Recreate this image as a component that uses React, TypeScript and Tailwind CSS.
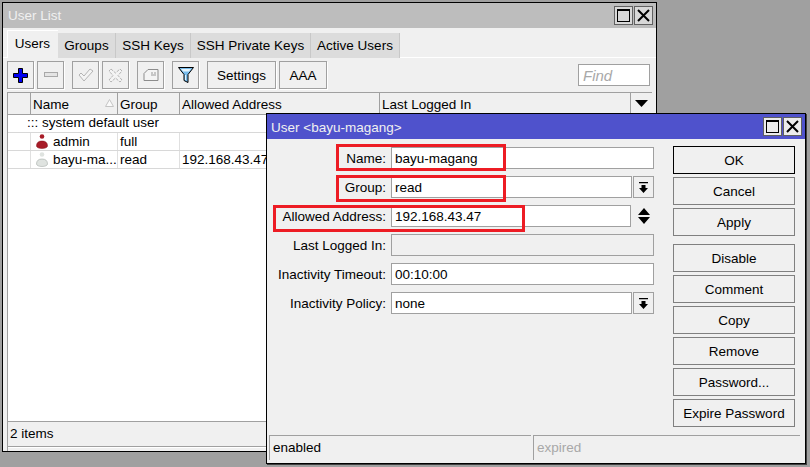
import React from 'react';

const Plus = () => (
    <svg width="15" height="15" viewBox="0 0 15 15">
        <path d="M5.500 .5h4v5h5v4h-5v5h-4v-5h-5v-4h5z" fill="#0000f0" stroke="#000" strokeWidth="1" />
    </svg>
);
const Minus = () => (
    <svg width="16" height="8" viewBox="0 0 16 8">
        <rect x="1.500" y="1.500" width="13" height="4" fill="#e4e4e4" stroke="#a8a8a8" />
    </svg>
);
const Check = () => (
    <svg width="16" height="14" viewBox="0 0 16 14">
        <path d="M1 7l2-2 3 3 6-7 3 2-9 10z" fill="#f4f4f4" stroke="#b4b4b4" />
    </svg>
);
const Cross = () => (
    <svg width="15" height="15" viewBox="0 0 15 15">
        <path d="M3 1l4.500 4 4.500-4 2 2-4 4.500 4 4.500-2 2-4.500-4-4.500 4-2-2 4-4.500-4-4.500z" fill="#f4f4f4" stroke="#b4b4b4" strokeDasharray="3 1" />
    </svg>
);
const Note = () => (
    <svg width="16" height="14" viewBox="0 0 16 14">
        <path d="M5 1.500h10v11H1v-7z" fill="#f4f4f4" stroke="#8c8c8c" />
        <path d="M8 5h2M11 5h2M8 7h5" stroke="#9a9a9a" />
    </svg>
);
const Funnel = () => (
    <svg width="16" height="16" viewBox="0 0 16 16">
        <path d="M.5 .5h15l-5.500 7v8l-4-2V7.500z" fill="#78bcec" stroke="#000" />
        <path d="M3 2h10l-2 2.500H5z" fill="#e4f4fc" />
        <path d="M7 8h1v5H7z" fill="#e4f4fc" />
    </svg>
);
const DownBar = () => (
    <svg width="11" height="11" viewBox="0 0 11 11">
        <path d="M1 0.500h9" stroke="#000" strokeWidth="1.500" />
        <path d="M3.500 3h4v3H10l-4.500 5L1 6h2.500z" fill="#000" />
    </svg>
);
const UpDown = () => (
    <svg width="12" height="16" viewBox="0 0 12 16">
        <path d="M6 0l6 7H0zM0 9h12l-6 7z" fill="#000" />
    </svg>
);
const Person = ({ body, edge }: { body: string; edge: string }) => (
    <svg className="shrink-0" width="12" height="15" viewBox="0 0 12 15">
        <circle cx="6" cy="2.500" r="2.300" fill={body} />
        <path d="M.5 12c0-3.500 2-5 5.500-5s5.500 1.500 5.500 5c0 1.500-2.500 2.500-5.500 2.500S.5 13.500.5 12z" fill={body} stroke={edge} strokeWidth="0.500" />
    </svg>
);

const ToolButton = ({ children, className }: { children: React.ReactNode; className?: string }) => (
    <div className={`flex h-[28px] items-center justify-center border border-[#a0a0a0] bg-[#f0f0f0] shadow-[1px_1px_0_#fff] ${className ?? 'w-[27px]'}`}>
        {children}
    </div>
);

const WinButton = ({ close, fill }: { close?: boolean; fill: string }) => (
    <div className={`flex h-[19px] w-[19px] items-center justify-center border border-[#606060] ${fill}`}>
        {close ? (
            <svg width="13" height="13" viewBox="0 0 13 13">
                <path d="M1 1l11 11M12 1L1 12" stroke="#000" strokeWidth="2" />
            </svg>
        ) : (
            <div className="h-[13px] w-[13px] border border-black border-t-[2px]" />
        )}
    </div>
);

const Tab = ({ label, className }: { label: string; className: string }) => (
    <div className={`mt-[3px] flex h-[25px] items-center justify-center border-r border-[#c8c8c8] bg-[#dcdcdc] pt-px ${className}`}>{label}</div>
);

const HeaderCell = ({ label, className }: { label: string; className: string }) => (
    <div className={`flex h-full items-center border-r border-[#a0a0a0] pt-[2px] pl-[2px] ${className}`}>{label}</div>
);

const Row = ({ icon, name, group, address }: { icon: React.ReactNode; name: string; group: string; address: string }) => (
    <div className="flex h-[18px] items-center border-b border-[#d8d8d8]">
        <div className="h-full w-[23px] border-r border-[#e0e0e0]" />
        <div className="flex h-full w-[87px] items-center gap-[5px] border-r border-[#e0e0e0] pl-[5px] whitespace-nowrap">
            {icon}
            <span>{name}</span>
        </div>
        <div className="flex h-full w-[62px] items-center border-r border-[#e0e0e0] pl-[2px]">{group}</div>
        <div className="pl-[2px]">{address}</div>
    </div>
);

const Field = ({ label, value, disabled, after, inputClass }: { label: string; value?: string; disabled?: boolean; after?: React.ReactNode; inputClass?: string }) => (
    <div className="flex h-[22px] items-center">
        <div className="w-[120px] pt-px pr-[5px] text-right whitespace-nowrap">{label}</div>
        <div className={`flex h-full items-center border border-[#a0a0a0] pt-px pl-[3px] ${disabled ? 'bg-[#f0f0f0]' : 'bg-white'} ${inputClass ?? 'w-[263px]'}`}>{value}</div>
        {after}
    </div>
);

const DialogButton = ({ label, strong, className }: { label: string; strong?: boolean; className?: string }) => (
    <div className={`flex h-[28px] w-[122px] items-center justify-center border pt-[2px] ${strong ? 'border-black' : 'border-[#808080]'} bg-[#f0f0f0] ${className ?? ''}`}>{label}</div>
);

const ArrowBox = () => (
    <div className="ml-px flex h-full w-[21px] items-center justify-center border border-[#a0a0a0] bg-[#f0f0f0]">
        <DownBar />
    </div>
);

const App = () => {
    return (
        <div className='relative h-[467px] w-[810px] overflow-hidden bg-[#a0a0a0] [font-family:"Liberation_Sans",sans-serif] text-[13.5px] leading-none text-black'>
            {/* User List window */}
            <div className="absolute top-[2px] left-[2px] flex h-[450px] w-[655px] flex-col border border-black bg-[#f0f0f0]">
                <div className="flex h-[25px] shrink-0 items-center justify-between bg-[#bdbdbd] pr-[3px] pl-[5px] text-[#f0f0f0]">
                    <span>User List</span>
                    <div className="flex gap-px">
                        <WinButton fill="bg-[#d8d8d8]" />
                        <WinButton close fill="bg-[#d8d8d8]" />
                    </div>
                </div>
                <div className="flex h-[30px] shrink-0 border-b border-white pt-[2px] pl-[4px]">
                    <div className="flex h-[28px] w-[51px] items-center justify-center bg-[#f0f0f0] shadow-[inset_1px_1px_0_#fff]">Users</div>
                    <Tab label="Groups" className="w-[58px]" />
                    <Tab label="SSH Keys" className="w-[75px]" />
                    <Tab label="SSH Private Keys" className="w-[120px]" />
                    <Tab label="Active Users" className="w-[89px]" />
                </div>
                <div className="flex h-[34px] shrink-0 items-center pr-[6px] pl-[4px]">
                    <ToolButton><Plus /></ToolButton>
                    <ToolButton className="ml-[3px] w-[27px]"><Minus /></ToolButton>
                    <ToolButton className="ml-[8px] w-[27px]"><Check /></ToolButton>
                    <ToolButton className="ml-[3px] w-[27px]"><Cross /></ToolButton>
                    <ToolButton className="ml-[8px] w-[27px]"><Note /></ToolButton>
                    <ToolButton className="ml-[8px] w-[27px]"><Funnel /></ToolButton>
                    <ToolButton className="ml-[8px] w-[69px] pt-[2px]">Settings</ToolButton>
                    <ToolButton className="ml-[3px] w-[48px] pt-[2px]">AAA</ToolButton>
                    <div className="ml-auto flex h-[22px] w-[72px] items-center border border-[#a0a0a0] bg-white pl-[4px] text-[15px] text-[#a8a8a8] italic">Find</div>
                </div>
                <div className="mr-[4px] ml-[4px] flex min-h-0 flex-1 flex-col border-t border-l border-[#a0a0a0]">
                    <div className="flex h-[22px] shrink-0 items-center border-b border-[#a0a0a0]">
                        <div className="h-full w-[23px] border-r border-[#a0a0a0]" />
                        <div className="relative flex h-full w-[87px] items-center border-r border-[#a0a0a0] pt-[2px] pl-[2px]">
                            Name
                            <svg className="absolute top-[6px] right-[3px]" width="9" height="8" viewBox="0 0 9 8">
                                <path d="M4.500 0.500L8.500 7.500H.5z" fill="#fafafa" stroke="#c4c4c4" />
                            </svg>
                        </div>
                        <HeaderCell label="Group" className="w-[62px]" />
                        <HeaderCell label="Allowed Address" className="w-[200px]" />
                        <HeaderCell label="Last Logged In" className="w-[251px]" />
                        <div className="flex h-full w-[21px] items-center justify-center">
                            <svg width="13" height="7" viewBox="0 0 13 7">
                                <path d="M0 0h13L6.500 7z" fill="#000" />
                            </svg>
                        </div>
                    </div>
                    <div className="min-h-0 flex-1 bg-white">
                        <div className="flex h-[18px] items-center border-b border-[#d8d8d8] pb-px pl-[19px]">::: system default user</div>
                        <Row icon={<Person body="#a81c28" edge="#801018" />} name="admin" group="full" address="" />
                        <Row icon={<Person body="#dfe3e0" edge="#98a09c" />} name="bayu-ma..." group="read" address="192.168.43.47" />
                    </div>
                    <div className="flex h-[25px] shrink-0 items-center border-t border-[#a0a0a0] pl-[2px]">2 items</div>
                    <div className="h-[5px] shrink-0 border-t border-[#a0a0a0] shadow-[inset_0_1px_0_#fff]" />
                </div>
            </div>

            {/* User edit dialog */}
            <div className="absolute top-[113px] left-[266px] flex h-[351px] w-[540px] flex-col border border-black bg-[#f0f0f0] shadow-[1px_1px_0_#404040]">
                <div className="flex h-[25px] shrink-0 items-center justify-between bg-[#4f52cc] pr-[3px] pl-[4px] text-[#f0f0f0]">
                    <span className="pt-[2px]">User &lt;bayu-magang&gt;</span>
                    <div className="flex gap-px">
                        <WinButton fill="bg-[#ececec]" />
                        <WinButton close fill="bg-[#ececec]" />
                    </div>
                </div>
                <div className="flex min-h-0 flex-1 pt-[7px]">
                    <div className="flex w-[406px] flex-col gap-[7px] pt-px pl-[4px]">
                        <Field label="Name:" value="bayu-magang" />
                        <Field label="Group:" value="read" inputClass="w-[241px]" after={<ArrowBox />} />
                        <Field
                            label="Allowed Address:"
                            value="192.168.43.47"
                            inputClass="w-[240px]"
                            after={<div className="ml-[7px]"><UpDown /></div>}
                        />
                        <Field label="Last Logged In:" disabled />
                        <Field label="Inactivity Timeout:" value="00:10:00" />
                        <Field label="Inactivity Policy:" value="none" inputClass="w-[241px]" after={<ArrowBox />} />
                    </div>
                    <div className="flex flex-col gap-[3px]">
                        <DialogButton label="OK" strong />
                        <DialogButton label="Cancel" />
                        <DialogButton label="Apply" />
                        <DialogButton label="Disable" className="mt-[5px]" />
                        <DialogButton label="Comment" />
                        <DialogButton label="Copy" />
                        <DialogButton label="Remove" />
                        <DialogButton label="Password..." />
                        <DialogButton label="Expire Password" />
                    </div>
                </div>
                <div className="mb-[3px] flex h-[25px] shrink-0 gap-[2px] pr-[5px] pl-[2px]">
                    <div className="flex w-[262px] items-center border-t border-l border-[#a0a0a0] pl-[3px]">enabled</div>
                    <div className="flex flex-1 items-center border-t border-l border-[#a0a0a0] pl-[3px] text-[#a8a8a8]">expired</div>
                </div>
            </div>

            {/* Red annotation boxes */}
            <div className="absolute top-[144px] left-[336px] h-[27px] w-[170px] border-[3px] border-[#ed1c24]" />
            <div className="absolute top-[175px] left-[336px] h-[27px] w-[170px] border-[3px] border-[#ed1c24]" />
            <div className="absolute top-[205px] left-[273px] h-[27px] w-[252px] border-[3px] border-[#ed1c24]" />
        </div>
    );
};

export default App;
